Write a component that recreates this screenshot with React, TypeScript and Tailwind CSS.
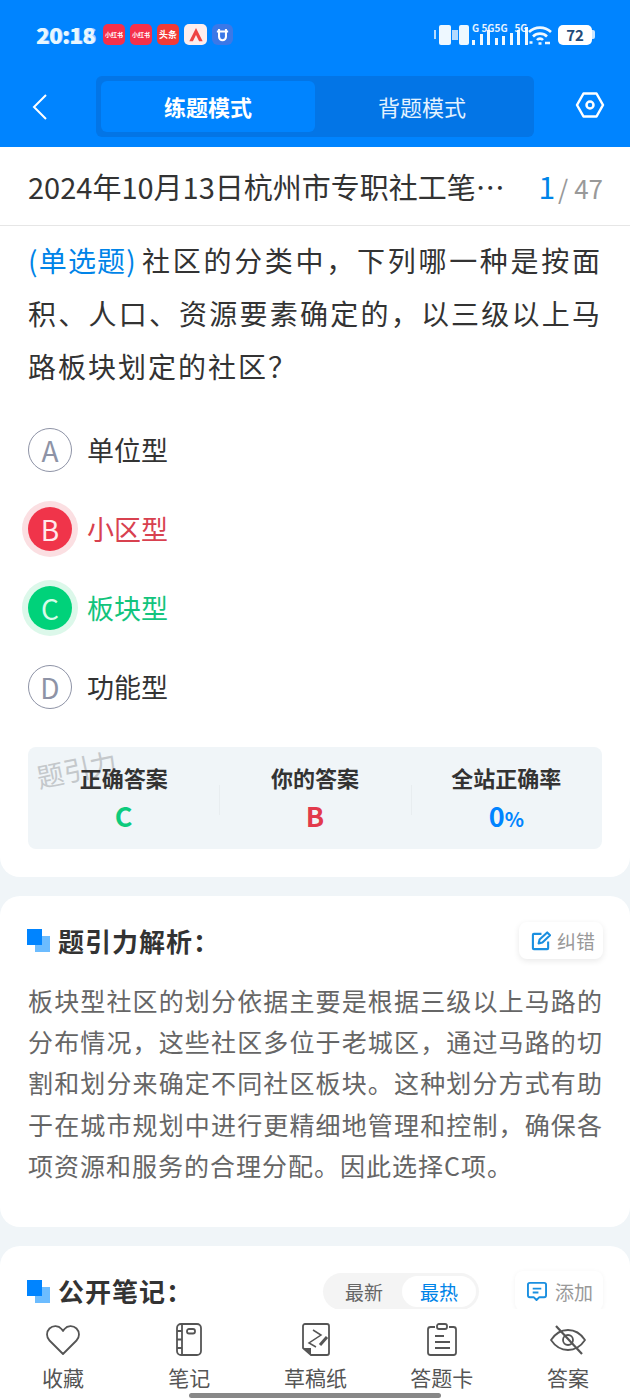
const cjk = "font-['Noto_Sans_CJK_SC','Noto_Sans',sans-serif]";

const options = [
  { key: "A", label: "单位型", state: "idle" },
  { key: "B", label: "小区型", state: "wrong" },
  { key: "C", label: "板块型", state: "right" },
  { key: "D", label: "功能型", state: "idle" },
];

function AppBadge({ bg, label, small }: { bg: string; label: string; small?: boolean }) {
  return (
    <div className={`flex h-[21px] w-[22px] items-center justify-center rounded-[5px] ${bg}`}>
      <span className={`whitespace-nowrap font-bold leading-none text-white ${small ? "text-[6px]" : "text-[9px]"}`}>{label}</span>
    </div>
  );
}

function StatusBar() {
  const bars = [5, 11, 15, 7, 9, 12, 15, 18];
  return (
    <div className="flex h-[76px] items-start justify-between pl-[36px] pr-[35px] pt-[24px]">
      <div className="flex items-center gap-[5px]">
        <div className="relative mr-[2px] h-[21px] w-[60px]">
          <span className="absolute left-0 top-0 text-[22px] font-black leading-[21px] tracking-[-0.4px] text-[#e8f6ff]">20:18</span>
          <span className="absolute left-[1px] top-0 text-[22px] font-black leading-[21px] tracking-[-0.4px] text-[#e8f6ff]/70">20:16</span>
        </div>
        <AppBadge bg="bg-[#f5304a]" label="小红书" small />
        <AppBadge bg="bg-[#f5304a]" label="小红书" small />
        <AppBadge bg="bg-[#f23a36]" label="头条" />
        <div className="flex h-[21px] w-[23px] items-center justify-center rounded-[5px] bg-[#fdeeee]">
          <svg width="16" height="16" viewBox="0 0 17 18" fill="#ee4444">
            <path d="M8.500 1 16 16h-4L8.500 9 5 16H1z" />
          </svg>
        </div>
        <div className="flex h-[21px] w-[21px] items-center justify-center rounded-[6px] bg-[#3b78e7]">
          <svg width="13" height="14" viewBox="0 0 15 16" fill="none" stroke="#fff" strokeWidth="2.400">
            <path d="M3.500 1v9a4 4 0 0 0 8 0V1M1 4h13" />
          </svg>
        </div>
      </div>
      <div className="flex h-[21px] items-center">
        <div className="flex items-center gap-[1px]">
          <div className="h-[9px] w-[2px] bg-white/70" />
          <div className="ml-[2px] h-[20px] w-[12px] rounded-[2px] bg-[#eef8ff]" />
          <div className="h-[10px] w-[6px] bg-white/70" />
          <div className="h-[20px] w-[10px] rounded-[2px] bg-[#eef8ff]" />
        </div>
        <div className="relative ml-[3px] flex h-[20px] w-[56px] items-end justify-between">
          <span className="absolute -top-[2px] left-0 whitespace-pre text-[10px] font-semibold leading-[10px] text-white/90">G 5G5G   5G</span>
          {bars.map((h, i) => (
            <div key={i} className="w-[3px] bg-[#eef8ff]" style={{ height: h }} />
          ))}
        </div>
        <svg width="24" height="20" viewBox="0 0 24 20" fill="none" stroke="#eef8ff" strokeWidth="2.600">
          <path d="M1 7a16 16 0 0 1 22 0M5 11.500a10 10 0 0 1 14 0M9 15a4 4 0 0 1 6 0" />
          <path d="M1.500 17.500h3M10.500 18.500h3M17 18h5" />
        </svg>
        <div className="ml-[6px] flex items-center">
          <div className="flex h-[20px] w-[34px] items-center justify-center rounded-[5px] bg-white">
            <span className="text-[15px] font-semibold leading-none text-[#234a78]">72</span>
          </div>
          <div className="h-[9px] w-[3px] rounded-r-[2px] bg-white/80" />
        </div>
      </div>
    </div>
  );
}

function Header() {
  return (
    <div className="h-[147px] shrink-0 bg-[#0084ff]">
      <StatusBar />
      <div className="flex items-start pl-[32px] pr-[25px]">
        <svg className="mt-[18px]" width="16" height="26" viewBox="0 0 16 26" fill="none" stroke="#fff" strokeWidth="2">
          <path d="M14 1 2 13l12 12" />
        </svg>
        <div className="ml-[48px] flex h-[61px] w-[438px] rounded-[6px] bg-[#0375e6] p-[5px]">
          <div className="flex w-[214px] items-center justify-center rounded-[6px] bg-[#0084ff]">
            <span className="text-[22px] font-bold text-white">练题模式</span>
          </div>
          <div className="flex flex-1 items-center justify-center">
            <span className="text-[22px] text-[#e4f2ff]">背题模式</span>
          </div>
        </div>
        <svg className="ml-auto mt-[14px]" width="30" height="30" viewBox="0 0 30 30" fill="none" stroke="#fff" strokeWidth="2.500">
          <path d="M8.500 3.500h13L28 15l-6.500 11.500h-13L2 15z" strokeLinejoin="round" />
          <circle cx="15" cy="15" r="3.500" />
        </svg>
      </div>
    </div>
  );
}

function OptionRow({ optKey, label, state }: { optKey: string; label: string; state: string }) {
  const circle =
    state === "wrong"
      ? "bg-[#f0344a] text-[#ffe9ec] ring-[6px] ring-[#fbdfe2]"
      : state === "right"
        ? "bg-[#00d27a] text-[#d8fbe9] ring-[6px] ring-[#dcf8ea]"
        : "border border-[#8e93a6] text-[#8e93a6]";
  const text = state === "wrong" ? "text-[#d8414f]" : state === "right" ? "text-[#12c47d]" : "text-[#333333]";
  return (
    <div className="flex h-[79px] items-center">
      <div className={`flex h-[44px] w-[44px] items-center justify-center rounded-full text-[28px] leading-none ${circle}`}>
        {optKey}
      </div>
      <span className={`ml-[15px] text-[27px] leading-none ${text}`}>{label}</span>
    </div>
  );
}

function Stat({ title, children }: { title: string; children: React.ReactNode }) {
  return (
    <div className="flex flex-col items-center">
      <span className="whitespace-nowrap text-[22px] font-bold leading-[28px] text-[#333333]">{title}</span>
      <div className="mt-[8px] flex h-[30px] items-end font-bold leading-none">{children}</div>
    </div>
  );
}

function SectionTitle({ title }: { title: string }) {
  return (
    <div className="flex items-center">
      <div className="relative h-[23px] w-[23px]">
        <div className="absolute bottom-0 right-0 h-[16px] w-[15px] bg-[#6cbcff]" />
        <div className="absolute left-0 top-0 h-[16px] w-[15px] bg-[#0084ff]" />
      </div>
      <span className="ml-[8px] text-[26px] font-bold leading-none tracking-[1px] text-[#333333]">{title}</span>
    </div>
  );
}

function TabIcon({ name }: { name: string }) {
  const common = { width: 38, height: 38, viewBox: "0 0 38 38", fill: "none", stroke: "#555555", strokeWidth: 1.800 };
  if (name === "heart") {
    return (
      <svg {...common}>
        <path d="M19 33 5.500 19.500a8.500 8.500 0 0 1 0-12c3.500-3.300 9-3 12 .5l1.500 2 1.500-2c3-3.500 8.500-3.800 12-.5a8.500 8.500 0 0 1 0 12z" strokeLinejoin="round" />
      </svg>
    );
  }
  if (name === "book") {
    return (
      <svg {...common}>
        <rect x="7" y="3" width="24" height="31" rx="4" />
        <path d="M12 3v31M7 10h5M7 18.500h5M7 27h5" />
        <rect x="17" y="8" width="8" height="4.500" rx="2" />
      </svg>
    );
  }
  if (name === "draft") {
    return (
      <svg {...common}>
        <path d="M8 3h22a2 2 0 0 1 2 2v27a2 2 0 0 1-2 2H14l-8-7V5a2 2 0 0 1 2-2z" strokeLinejoin="round" />
        <path d="M6 27h8v7z" fill="#555555" stroke="none" />
        <path d="M16 9l8 5-12 8 7 4" strokeWidth="1.500" />
        <path d="M23 24l7-8" strokeWidth="3" />
      </svg>
    );
  }
  if (name === "card") {
    return (
      <svg {...common}>
        <path d="M12 6H7.500A2.500 2.500 0 0 0 5 8.500v23A2.500 2.500 0 0 0 7.500 34h23a2.500 2.500 0 0 0 2.500-2.500v-23A2.500 2.500 0 0 0 30.500 6H26" />
        <rect x="14" y="3" width="10" height="5" rx="2" />
        <path d="M12 15h9M12 21h15M12 27h15" />
      </svg>
    );
  }
  return (
    <svg {...common}>
      <path d="M2 19c4-6 10-10 17-10s13 4 17 10c-4 6-10 10-17 10S6 25 2 19z" strokeLinejoin="round" />
      <circle cx="19" cy="19" r="5" />
      <path d="M7 5l26 28" strokeWidth="2.200" />
    </svg>
  );
}

const tabs = [
  { icon: "heart", label: "收藏" },
  { icon: "book", label: "笔记" },
  { icon: "draft", label: "草稿纸" },
  { icon: "card", label: "答题卡" },
  { icon: "eye", label: "答案" },
];

export default function App() {
  return (
    <div className={`relative flex h-[1400px] w-[630px] flex-col overflow-hidden bg-[#f0f5f8] ${cjk}`}>
      <Header />

      <div className="flex h-[79px] shrink-0 items-center justify-between border-b border-[#e6e6e6] bg-white pl-[28px] pr-[27px]">
        <span className="w-[480px] truncate text-[29px] leading-none text-[#333333]">2024年10月13日杭州市专职社工笔记汇总</span>
        <div className="flex items-baseline">
          <span className="text-[30px] leading-none text-[#0084e8]">1</span>
          <span className="ml-[3px] text-[26px] leading-none text-[#999999]">/ 47</span>
        </div>
      </div>

      <div className="min-h-0 flex-1 overflow-hidden">
        <div className="h-[651px] rounded-b-[20px] bg-white px-[28px] pt-[8px]">
          <p className="text-justify text-[28px] leading-[53px] tracking-[2px] text-[#333333]">
            <span className="mr-[5px] tracking-[0.500px] text-[#0084e8]">(单选题)</span>社区的分类中，下列哪一种是按面积、人口、资源要素确定的，以三级以上马路板块划定的社区？
          </p>
          <div className="mt-[17px]">
            {options.map((o) => (
              <OptionRow key={o.key} optKey={o.key} label={o.label} state={o.state} />
            ))}
          </div>
          <div className="relative mt-[21px] grid h-[102px] grid-cols-3 items-start rounded-[8px] bg-[#f0f5f8] pt-[16px]">
            <span className="absolute left-[8px] top-[8px] -rotate-12 text-[27px] leading-none text-[#c4c8cb]">题引力</span>
            <div className="relative">
              <Stat title="正确答案">
                <span className="text-[27px] text-[#0ccb7d]">C</span>
              </Stat>
            </div>
            <div className="relative">
              <div className="absolute left-0 top-[22px] h-[30px] w-px bg-[#e8edf0]" />
              <Stat title="你的答案">
                <span className="text-[27px] text-[#e23a4c]">B</span>
              </Stat>
            </div>
            <div className="relative">
              <div className="absolute left-0 top-[22px] h-[30px] w-px bg-[#e8edf0]" />
              <Stat title="全站正确率">
                <span className="text-[27px] text-[#0084ff]">0</span>
                <span className="text-[20px] text-[#0084ff]">%</span>
              </Stat>
            </div>
          </div>
        </div>

        <div className="mt-[19px] h-[331px] rounded-[20px] bg-white pl-[27px] pr-[27px] pt-[26px]">
          <div className="flex items-center justify-between">
            <SectionTitle title="题引力解析：" />
            <div className="flex h-[37px] w-[84px] items-center gap-[6px] rounded-[8px] bg-white pl-[12px] shadow-[0_2px_6px_rgba(0,0,0,0.09)]">
              <svg width="20" height="20" viewBox="0 0 21 21" fill="none" stroke="#1a8fe0" strokeWidth="2.200">
                <path d="M11 3H3a1 1 0 0 0-1 1v14a1 1 0 0 0 1 1h14a1 1 0 0 0 1-1v-7" />
                <path d="M8 13l1-4 8-7.500 3 3L12 12z" strokeLinejoin="round" />
              </svg>
              <span className="text-[19px] leading-none text-[#999999]">纠错</span>
            </div>
          </div>
          <p className="ml-[1px] mt-[21px] text-justify text-[25px] leading-[41.200px] tracking-[1px] text-[#666666]">
            板块型社区的划分依据主要是根据三级以上马路的分布情况，这些社区多位于老城区，通过马路的切割和划分来确定不同社区板块。这种划分方式有助于在城市规划中进行更精细地管理和控制，确保各项资源和服务的合理分配。因此选择C项。
          </p>
        </div>

        <div className="mt-[19px] rounded-t-[20px] bg-white pl-[27px] pr-[27px] pt-[25px]">
          <div className="flex items-center">
            <SectionTitle title="公开笔记：" />
            <div className="ml-auto flex h-[37px] w-[156px] items-center rounded-full bg-[#f4f4f4] p-[3px]">
              <span className="flex-1 text-center text-[19px] leading-none text-[#666666]">最新</span>
              <span className="flex h-[31px] w-[74px] items-center justify-center rounded-full bg-white text-[19px] leading-none text-[#0084e8]">最热</span>
            </div>
            <div className="ml-[36px] flex h-[40px] w-[88px] items-center gap-[8px] rounded-[8px] bg-white pl-[12px] shadow-[0_1px_5px_rgba(0,0,0,0.05)]">
              <svg width="20" height="20" viewBox="0 0 21 21" fill="none" stroke="#1a8fe0" strokeWidth="2">
                <path d="M3 2h15a2 2 0 0 1 2 2v11a2 2 0 0 1-2 2h-5l-3 3-3-3H3a2 2 0 0 1-2-2V4a2 2 0 0 1 2-2z" strokeLinejoin="round" />
                <path d="M6 8h9M6 12h6" />
              </svg>
              <span className="text-[19px] leading-none text-[#999999]">添加</span>
            </div>
          </div>
        </div>
      </div>

      <div className="relative flex h-[91px] shrink-0 justify-between bg-white pl-[42px] pr-[41px] pt-[12px]">
        {tabs.map((t) => (
          <div key={t.label} className="flex w-[42px] flex-col items-center">
            <TabIcon name={t.icon} />
            <span className="mt-[8px] whitespace-nowrap text-[21px] leading-none text-[#555555]">{t.label}</span>
          </div>
        ))}
        <div className="absolute bottom-[2px] left-[189px] h-[5px] w-[252px] rounded-full bg-[#888888]" />
      </div>
    </div>
  );
}
